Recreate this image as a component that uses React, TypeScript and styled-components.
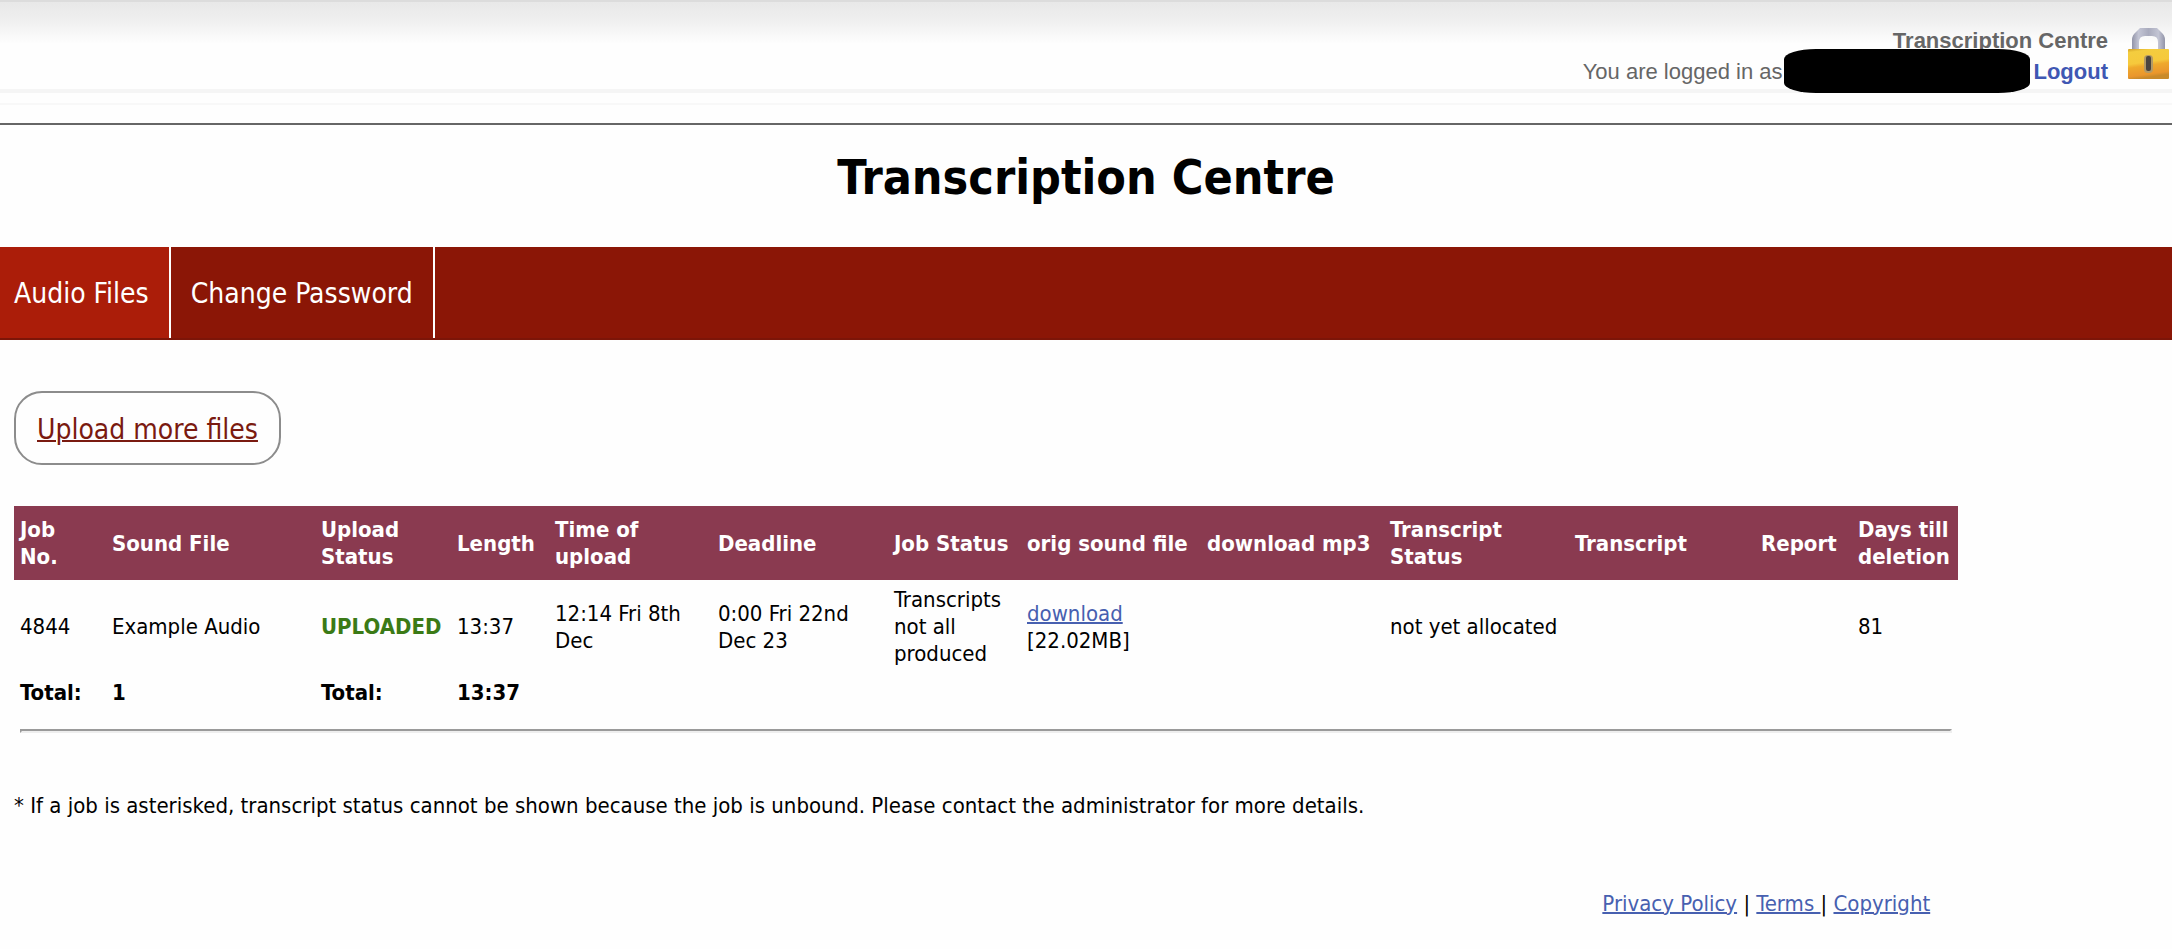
import React from 'react';
import styled, { createGlobalStyle } from 'styled-components';

const GlobalStyle = createGlobalStyle`
  *, *::before, *::after { box-sizing: border-box; }
  body {
    margin: 0;
    background: #fefefe;
    color: #000;
    font-family: 'DejaVu Sans Condensed', 'DejaVu Sans', sans-serif;
    font-size: 22px;
    line-height: 27px;
  }
`;

const SiteHeader = styled.header`
  border-top: 2px solid #dcdcdc;
  border-bottom: 2px solid #666;
  background: linear-gradient(#e8e8e8, #efefef 18px, #fefefe 42px);
`;

const AccountBar = styled.div`
  display: flex;
  justify-content: flex-end;
  align-items: center;
  gap: 20px;
  height: 91px;
  padding-right: 3px;
  border-bottom: 4px solid #f5f5f5;
  font-family: 'Liberation Sans', Arial, sans-serif;
  line-height: 31px;
  color: #666;
`;

const AccountText = styled.div`
  display: flex;
  flex-direction: column;
  align-items: flex-end;
  margin-top: 20px;
`;

const AccountName = styled.strong`
  color: #666;
`;

const LoginLine = styled.div`
  display: flex;
  align-items: center;
`;

const HiddenName = styled.span`
  width: 246px;
  height: 44px;
  margin: -8px 3px -8px 2px;
  border-radius: 32px / 10px;
  background: #000;
`;

const LogoutLink = styled.a`
  font-weight: 700;
  color: #3f57b3;
  text-decoration: none;
`;

const LockIcon = styled.svg`
  display: block;
  width: 41px;
  height: 51px;
  margin-top: 16px;
`;

const HeaderRule = styled.div`
  height: 30px;
  padding-top: 10px;

  &::before {
    content: '';
    display: block;
    height: 2px;
    background: #f8f8f8;
  }
`;

const Title = styled.h1`
  margin: 0;
  padding: 24px 0 42px;
  font-size: 48px;
  line-height: 56px;
  text-align: center;
`;

const Nav = styled.nav`
  display: flex;
  background: #8b1606;
  border-bottom: 2px solid #7c1508;
`;

const Tab = styled.a<{ $active?: boolean }>`
  padding: 30px 20px 27px;
  border-right: 2px solid #fff;
  background: ${({ $active }) => ($active ? '#ab1d09' : 'transparent')};
  color: #fff;
  font-size: 28px;
  line-height: 34px;
  text-decoration: none;

  &:first-child { padding-left: 14px; }
`;

const Content = styled.main`
  padding-left: 14px;
`;

const UploadBox = styled.div`
  display: inline-block;
  margin: 51px 0 41px;
  padding: 20px 21px 16px;
  border: 2px solid #8c8c8c;
  border-radius: 28px;
  font-size: 28px;
  line-height: 34px;
`;

const UploadLink = styled.a`
  color: #7a1a10;
  text-decoration-thickness: 2px;
`;

const JobsTable = styled.table`
  width: 90%;
  table-layout: fixed;
  border-collapse: collapse;
`;

const Column = styled.col<{ $width: number }>`
  width: ${({ $width }) => $width}px;
`;

const HeadCell = styled.th`
  padding: 10px 6px;
  background: #8a3a50;
  color: #fff;
  text-align: left;

  &:first-child { padding-right: 20px; }
`;

const Cell = styled.td`
  padding: 6px;
`;

const TotalCell = styled.th`
  padding: 6px;
  text-align: left;
`;

const RuleCell = styled.td`
  padding: 17px 6px 14px;
`;

const Rule = styled.hr`
  margin: 0;
  border: 2px inset #eee;
`;

const Uploaded = styled.strong`
  color: #3b7a16;
`;

const Link = styled.a`
  color: #4760b0;
  text-decoration-thickness: 2px;
  white-space: pre;
`;

const Note = styled.p`
  margin: 45px 0 0;
`;

const Footer = styled.footer`
  width: 90%;
  margin-top: 71px;
  padding: 0 26px 30px 0;
  text-align: right;
`;

const columns: [string, number][] = [
  ['Job No.', 92],
  ['Sound File', 209],
  ['Upload Status', 136],
  ['Length', 98],
  ['Time of upload', 163],
  ['Deadline', 176],
  ['Job Status', 133],
  ['orig sound file', 180],
  ['download mp3', 183],
  ['Transcript Status', 185],
  ['Transcript', 186],
  ['Report', 97],
  ['Days till deletion', 106],
];

function Lock() {
  return (
    <LockIcon viewBox="0 0 41 51" aria-hidden="true">
      <defs>
        <linearGradient id="shackle" x1="0" x2="1" y1="0" y2="0">
          <stop offset="0" stopColor="#9294a8" />
          <stop offset="0.2" stopColor="#c3c5d4" />
          <stop offset="0.5" stopColor="#a9abbd" />
          <stop offset="0.8" stopColor="#c3c5d4" />
          <stop offset="1" stopColor="#9294a8" />
        </linearGradient>
        <linearGradient id="body" x1="0" x2="0.2" y1="0" y2="1">
          <stop offset="0" stopColor="#d3a024" />
          <stop offset="0.12" stopColor="#f4cd3f" />
          <stop offset="0.5" stopColor="#f6c93c" />
          <stop offset="0.62" stopColor="#efa92c" />
          <stop offset="0.9" stopColor="#ea962c" />
          <stop offset="1" stopColor="#c98a2a" />
        </linearGradient>
      </defs>
      <path
        d="M4 22V12Q4 7 8 4L12 0H29L33 4Q37 7 37 12V22H30V14Q30 8 24 8H17Q11 8 11 14V22Z"
        fill="url(#shackle)"
      />
      <rect x="0" y="21" width="41" height="30" rx="1" fill="url(#body)" />
      <rect x="16" y="27" width="9" height="18" rx="4" fill="#b39a66" />
      <rect x="18" y="28" width="5" height="15" rx="2" fill="#4a4440" />
    </LockIcon>
  );
}

export default function App() {
  return (
    <>
      <GlobalStyle />
      <SiteHeader>
        <AccountBar>
          <AccountText>
            <AccountName>Transcription Centre</AccountName>
            <LoginLine>
              You are logged in as
              <HiddenName />
              <LogoutLink href="#logout">Logout</LogoutLink>
            </LoginLine>
          </AccountText>
          <Lock />
        </AccountBar>
        <HeaderRule />
      </SiteHeader>
      <Title>Transcription Centre</Title>
      <Nav>
        <Tab href="#audio" $active>Audio Files</Tab>
        <Tab href="#password">Change Password</Tab>
      </Nav>
      <Content>
        <UploadBox>
          <UploadLink href="#upload">Upload more files</UploadLink>
        </UploadBox>
        <JobsTable>
          <colgroup>
            {columns.map(([name, width]) => <Column key={name} $width={width} />)}
          </colgroup>
          <thead>
            <tr>
              {columns.map(([name]) => <HeadCell key={name} scope="col">{name}</HeadCell>)}
            </tr>
          </thead>
          <tbody>
            <tr>
              <Cell>4844</Cell>
              <Cell>Example Audio</Cell>
              <Cell><Uploaded>UPLOADED</Uploaded></Cell>
              <Cell>13:37</Cell>
              <Cell>12:14 Fri 8th Dec</Cell>
              <Cell>0:00 Fri 22nd Dec 23</Cell>
              <Cell>Transcripts not all produced</Cell>
              <Cell><Link href="#download">download</Link><br />[22.02MB]</Cell>
              <Cell />
              <Cell>not yet allocated</Cell>
              <Cell />
              <Cell />
              <Cell>81</Cell>
            </tr>
          </tbody>
          <tfoot>
            <tr>
              <TotalCell>Total:</TotalCell>
              <TotalCell>1</TotalCell>
              <TotalCell>Total:</TotalCell>
              <TotalCell>13:37</TotalCell>
              <TotalCell as="td" colSpan={9} />
            </tr>
            <tr>
              <RuleCell colSpan={13}><Rule /></RuleCell>
            </tr>
          </tfoot>
        </JobsTable>
        <Note>
          * If a job is asterisked, transcript status cannot be shown because the job is unbound.
          Please contact the administrator for more details.
        </Note>
        <Footer>
          <Link href="#privacy">Privacy Policy</Link> | <Link href="#terms">{'Terms '}</Link>|{' '}
          <Link href="#copyright">Copyright</Link>
        </Footer>
      </Content>
    </>
  );
}
